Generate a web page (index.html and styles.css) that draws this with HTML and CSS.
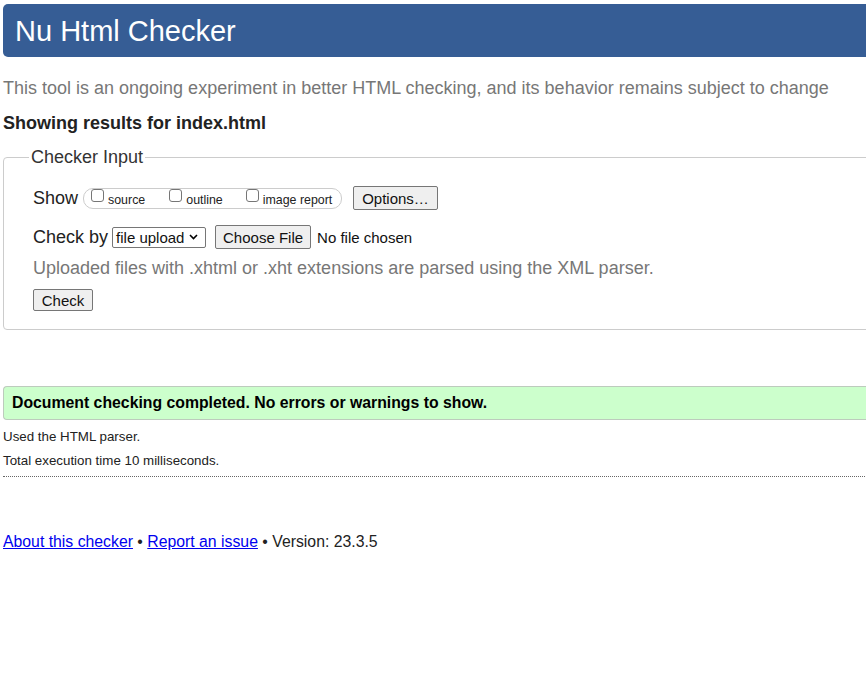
FILE: index.html
```html
<!DOCTYPE html>
<html lang="en">
<head>
<meta charset="utf-8">
<title>Nu Html Checker</title>
<link rel="stylesheet" href="styles.css">
</head>
<body>
<div class="page">
  <h1 class="title">Nu Html Checker</h1>
  <p class="intro">This tool is an ongoing experiment in better HTML checking, and its behavior remains subject to change</p>
  <p class="showing">Showing results for index.html</p>
  <fieldset class="input">
    <legend class="legend">Checker Input</legend>
    <div class="row row-show">
      <span class="label">Show</span>
      <span class="opts">
        <label class="opt opt-source"><input type="checkbox" class="cb"><span>source</span></label>
        <label class="opt opt-outline"><input type="checkbox" class="cb"><span>outline</span></label>
        <label class="opt opt-image"><input type="checkbox" class="cb"><span>image report</span></label>
      </span>
      <button class="btn btn-options" type="button">Options…</button>
    </div>
    <div class="row row-check">
      <span class="label">Check by</span>
      <span class="select">file upload<svg class="chev" width="9" height="6" viewBox="0 0 9 6"><path d="M1 1l3.5 3.5L8 1" fill="none" stroke="#000" stroke-width="1.6"/></svg></span>
      <button class="btn btn-file" type="button">Choose File</button>
      <span class="nofile">No file chosen</span>
    </div>
    <p class="hint">Uploaded files with .xhtml or .xht extensions are parsed using the XML parser.</p>
    <button class="btn btn-check" type="button">Check</button>
  </fieldset>
  <p class="success">Document checking completed. No errors or warnings to show.</p>
  <p class="meta meta-first">Used the HTML parser.</p>
  <p class="meta">Total execution time 10 milliseconds.</p>
  <hr class="rule">
  <p class="footer"><a href="#">About this checker</a> • <a href="#">Report an issue</a> • Version: 23.3.5</p>
</div>
</body>
</html>
```
FILE: styles.css
```css
html {
  overflow: hidden;
  background: #fff;
}
body {
  margin: 0;
  font-family: "Liberation Sans", Arial, sans-serif;
  color: #222;
}
.page {
  padding: 4px 0 0 3px;
  width: 900px;
}
.title {
  margin: 0;
  height: 53px;
  box-sizing: border-box;
  padding: 0 0 0 12px;
  background: #365d95;
  color: #fff;
  font-size: 29px;
  font-weight: normal;
  line-height: 54px;
  border-radius: 5px 0 0 5px;
}
.intro {
  margin: 21px 0 0;
  font-size: 18px;
  line-height: 20px;
  color: #777;
}
.showing {
  margin: 15px 0 0;
  font-size: 18px;
  line-height: 20px;
  font-weight: bold;
  color: #222;
}
.input {
  margin: 14px 0 0;
  padding: 0 0 18px 29px;
  border: 1px solid #ccc;
  border-radius: 4px;
  min-width: 0;
}
.legend {
  margin-left: -4px;
  padding: 0 2px;
  font-size: 18px;
  line-height: 20px;
  color: #333;
}
.row {
  display: flex;
  align-items: center;
  height: 24px;
}
.row-show {
  margin-top: 19px;
}
.row-check {
  margin-top: 15px;
}
.label {
  font-size: 18px;
  color: #222;
}
.opts {
  display: flex;
  align-items: center;
  margin-left: 5px;
  height: 21px;
  box-sizing: border-box;
  width: 259px;
  border: 1px solid #ccc;
  border-radius: 10px;
  padding-left: 7px;
}
.opt {
  display: flex;
  align-items: flex-start;
  font-size: 12.4px;
  color: #222;
}
.opt span {
  padding-top: 4px;
}
.opt-outline {
  margin-left: 24px;
}
.opt-image {
  margin-left: 23px;
}
.cb {
  margin: 0 4px 0 0;
  width: 13px;
  height: 13px;
  appearance: none;
  border: 1px solid #767676;
  border-radius: 3px;
  background: #fff;
}
.btn {
  font-family: "Liberation Sans", Arial, sans-serif;
  font-size: 15px;
  color: #111;
  background: #efefef;
  border: 1px solid #767676;
  border-radius: 2px;
  padding: 0 8px;
  margin: 0;
}
.btn-options {
  margin-left: 11px;
  height: 24px;
  width: 85px;
}
.select {
  display: flex;
  align-items: center;
  margin-left: 4px;
  height: 21px;
  box-sizing: border-box;
  width: 94px;
  border: 1px solid #767676;
  border-radius: 2px;
  padding-left: 3px;
  font-size: 15px;
  color: #111;
}
.chev {
  margin-left: 5px;
}
.btn-file {
  margin-left: 9px;
  height: 24px;
  width: 96px;
  padding: 0;
}
.nofile {
  margin-left: 6px;
  font-size: 15px;
  color: #111;
}
.hint {
  margin: 9px 0 0;
  font-size: 18px;
  line-height: 20px;
  color: #777;
}
.btn-check {
  display: block;
  margin-top: 11px;
  height: 22px;
  width: 60px;
  padding: 0;
}
.success {
  margin: 56px 0 0;
  height: 34px;
  box-sizing: border-box;
  padding-left: 8px;
  background: #ccffcc;
  border: 1px solid #bdcbbd;
  border-right: 0;
  border-radius: 4px 0 0 4px;
  font-size: 15.8px;
  line-height: 32px;
  font-weight: bold;
  color: #000;
}
.meta {
  margin: 8px 0 0;
  font-size: 13.33px;
  line-height: 16px;
  color: #222;
}
.meta-first {
  margin-top: 9px;
}
.rule {
  margin: 7px 0 0;
  border: 0;
  border-top: 1px dotted #666;
  height: 0;
}
.footer {
  margin: 55px 0 0;
  font-size: 15.8px;
  line-height: 20px;
  color: #222;
}
.footer a {
  color: #0000ee;
}
```
